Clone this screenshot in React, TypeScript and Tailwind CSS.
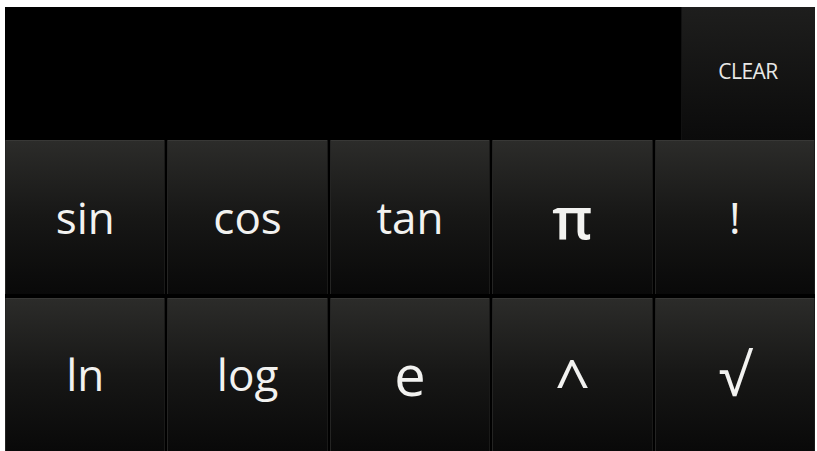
const rows = [
  [
    { label: 'sin', cls: 'text-[44px]' },
    { label: 'cos', cls: 'text-[44px]' },
    { label: 'tan', cls: 'text-[44px]' },
    { label: 'π', cls: 'text-[58px] font-semibold' },
    { label: '!', cls: 'text-[44px]' },
  ],
  [
    { label: 'ln', cls: 'text-[44px]' },
    { label: 'log', cls: 'text-[44px]' },
    { label: 'e', cls: 'text-[56px]' },
    { label: '^', cls: 'text-[62px] pt-[14px]' },
    { label: '√', cls: 'text-[58px]' },
  ],
];

function Key({ label, cls }: { label: string; cls: string }) {
  return (
    <button className="flex items-center justify-center bg-gradient-to-b from-[#2c2c2a] via-[#171716] to-[#090909] shadow-[inset_1px_0_0_#242423,inset_-1px_0_0_#1a1a19,inset_0_1px_0_#383836]">
      <span className={`leading-none text-[#f2f2f0] ${cls}`}>{label}</span>
    </button>
  );
}

export default function App() {
  return (
    <div
      className="w-[817px] h-[451px] bg-white pt-[7px] pl-[5px] pr-[2px] overflow-hidden"
      style={{ fontFamily: '"Open Sans", "Noto Sans", "DejaVu Sans", sans-serif' }}
    >
      <div className="flex flex-col h-full bg-black">
        {/* Display + clear */}
        <div className="flex h-[133px] shrink-0">
          <div className="flex-1 bg-black" />
          <button className="w-[134px] flex items-center justify-center pb-[3px] bg-gradient-to-b from-[#1e1e1d] to-[#0b0b0b] shadow-[inset_1px_0_0_#111]">
            <span className="text-[21px] text-[#e8e8e6] tracking-tight">CLEAR</span>
          </button>
        </div>

        {/* Keys */}
        <div className="flex-1 flex flex-col gap-[4px]">
          {rows.map((row, i) => (
            <div key={i} className="flex-1 grid grid-cols-5 gap-[2px]">
              {row.map((k) => (
                <Key key={k.label} label={k.label} cls={k.cls} />
              ))}
            </div>
          ))}
        </div>
      </div>
    </div>
  );
}
